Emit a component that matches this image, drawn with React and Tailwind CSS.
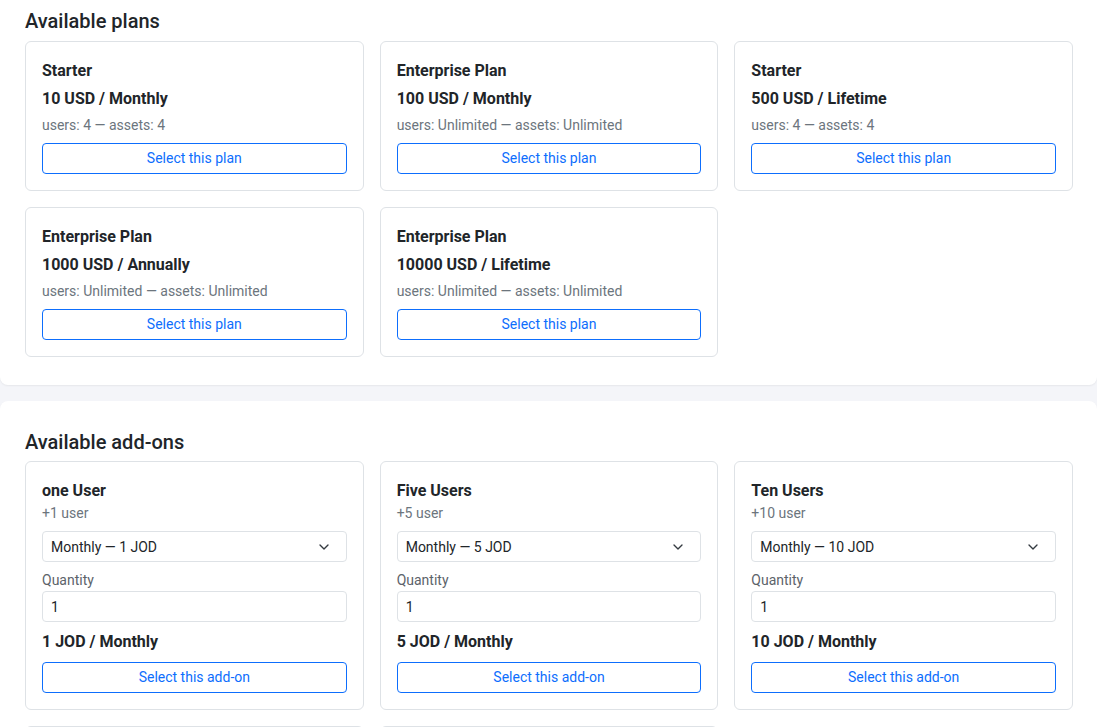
import React from 'react';
import { ChevronDown } from 'lucide-react';

const plans = [
  { name: 'Starter', price: '10 USD / Monthly', users: '4', assets: '4' },
  { name: 'Enterprise Plan', price: '100 USD / Monthly', users: 'Unlimited', assets: 'Unlimited' },
  { name: 'Starter', price: '500 USD / Lifetime', users: '4', assets: '4' },
  { name: 'Enterprise Plan', price: '1000 USD / Annually', users: 'Unlimited', assets: 'Unlimited' },
  { name: 'Enterprise Plan', price: '10000 USD / Lifetime', users: 'Unlimited', assets: 'Unlimited' },
];

const addons = [
  { name: 'one User', extra: '+1 user', price: 1 },
  { name: 'Five Users', extra: '+5 user', price: 5 },
  { name: 'Ten Users', extra: '+10 user', price: 10 },
  { name: 'Twenty Users', extra: '+20 user', price: 20 },
  { name: 'Fifty Users', extra: '+50 user', price: 50 },
];

const PlanCard = ({ plan }) => (
  <div className="bg-white border border-[#dee2e6] rounded-md px-4 pt-[17px] pb-4">
    <div className="text-base leading-6 font-bold mb-1">{plan.name}</div>
    <div className="text-base leading-6 font-bold mb-1">{plan.price}</div>
    <div className="text-sm leading-[21px] text-[#6c757d] mb-[7px]">
      users: {plan.users} — assets: {plan.assets}
    </div>
    <button className="w-full h-[31px] border border-[#0d6efd] text-[#0d6efd] rounded text-sm leading-[21px] bg-white hover:bg-[#0d6efd] hover:text-white">
      Select this plan
    </button>
  </div>
);

const AddonCard = ({ addon }) => (
  <div className="bg-white border border-[#dee2e6] rounded-md px-4 pt-[17px] pb-4">
    <div className="text-base leading-6 font-bold">{addon.name}</div>
    <div className="text-sm leading-[21px] text-[#6c757d] mb-[7px]">{addon.extra}</div>
    <div className="relative mb-2">
      <select className="appearance-none w-full h-[31px] border border-[#dee2e6] rounded pl-2 pr-8 text-sm text-[#212529] bg-white focus:outline-none">
        <option>Monthly — {addon.price} JOD</option>
        <option>Annually — {addon.price * 10} JOD</option>
      </select>
      <ChevronDown className="absolute right-[15px] top-1/2 -translate-y-1/2 text-[#343a40] pointer-events-none" size={16} strokeWidth={2} />
    </div>
    <label className="block text-sm leading-[21px] text-[#5c636a]">Quantity</label>
    <input
      type="number"
      defaultValue={1}
      className="w-full h-[31px] border border-[#dee2e6] rounded px-2 text-sm text-[#212529] mb-2 focus:outline-none [appearance:textfield] [&::-webkit-inner-spin-button]:appearance-none"
    />
    <div className="text-base leading-6 font-bold mb-2">{addon.price} JOD / Monthly</div>
    <button className="w-full h-[31px] border border-[#0d6efd] text-[#0d6efd] rounded text-sm leading-[21px] bg-white hover:bg-[#0d6efd] hover:text-white">
      Select this add-on
    </button>
  </div>
);

export default function App() {
  return (
    <div className="min-h-screen bg-[#f4f5f9] text-[#212529] font-['Roboto','Liberation_Sans',sans-serif]">
      <section className="bg-white rounded-b-lg shadow-[0_1px_2px_rgba(0,0,0,0.06)] pl-[25px] pr-6 pt-[9px] pb-7">
        <h5 className="text-xl leading-6 font-medium mb-2">Available plans</h5>
        <div className="grid grid-cols-3 gap-4">
          {plans.map((p, i) => (
            <PlanCard key={i} plan={p} />
          ))}
        </div>
      </section>

      <section className="bg-white rounded-lg shadow-[0_1px_2px_rgba(0,0,0,0.06)] pl-[25px] pr-6 pt-[29px] pb-7 mt-4">
        <h5 className="text-xl leading-6 font-medium mb-[7px]">Available add-ons</h5>
        <div className="grid grid-cols-3 gap-4">
          {addons.map((a, i) => (
            <AddonCard key={i} addon={a} />
          ))}
        </div>
      </section>
    </div>
  );
}
